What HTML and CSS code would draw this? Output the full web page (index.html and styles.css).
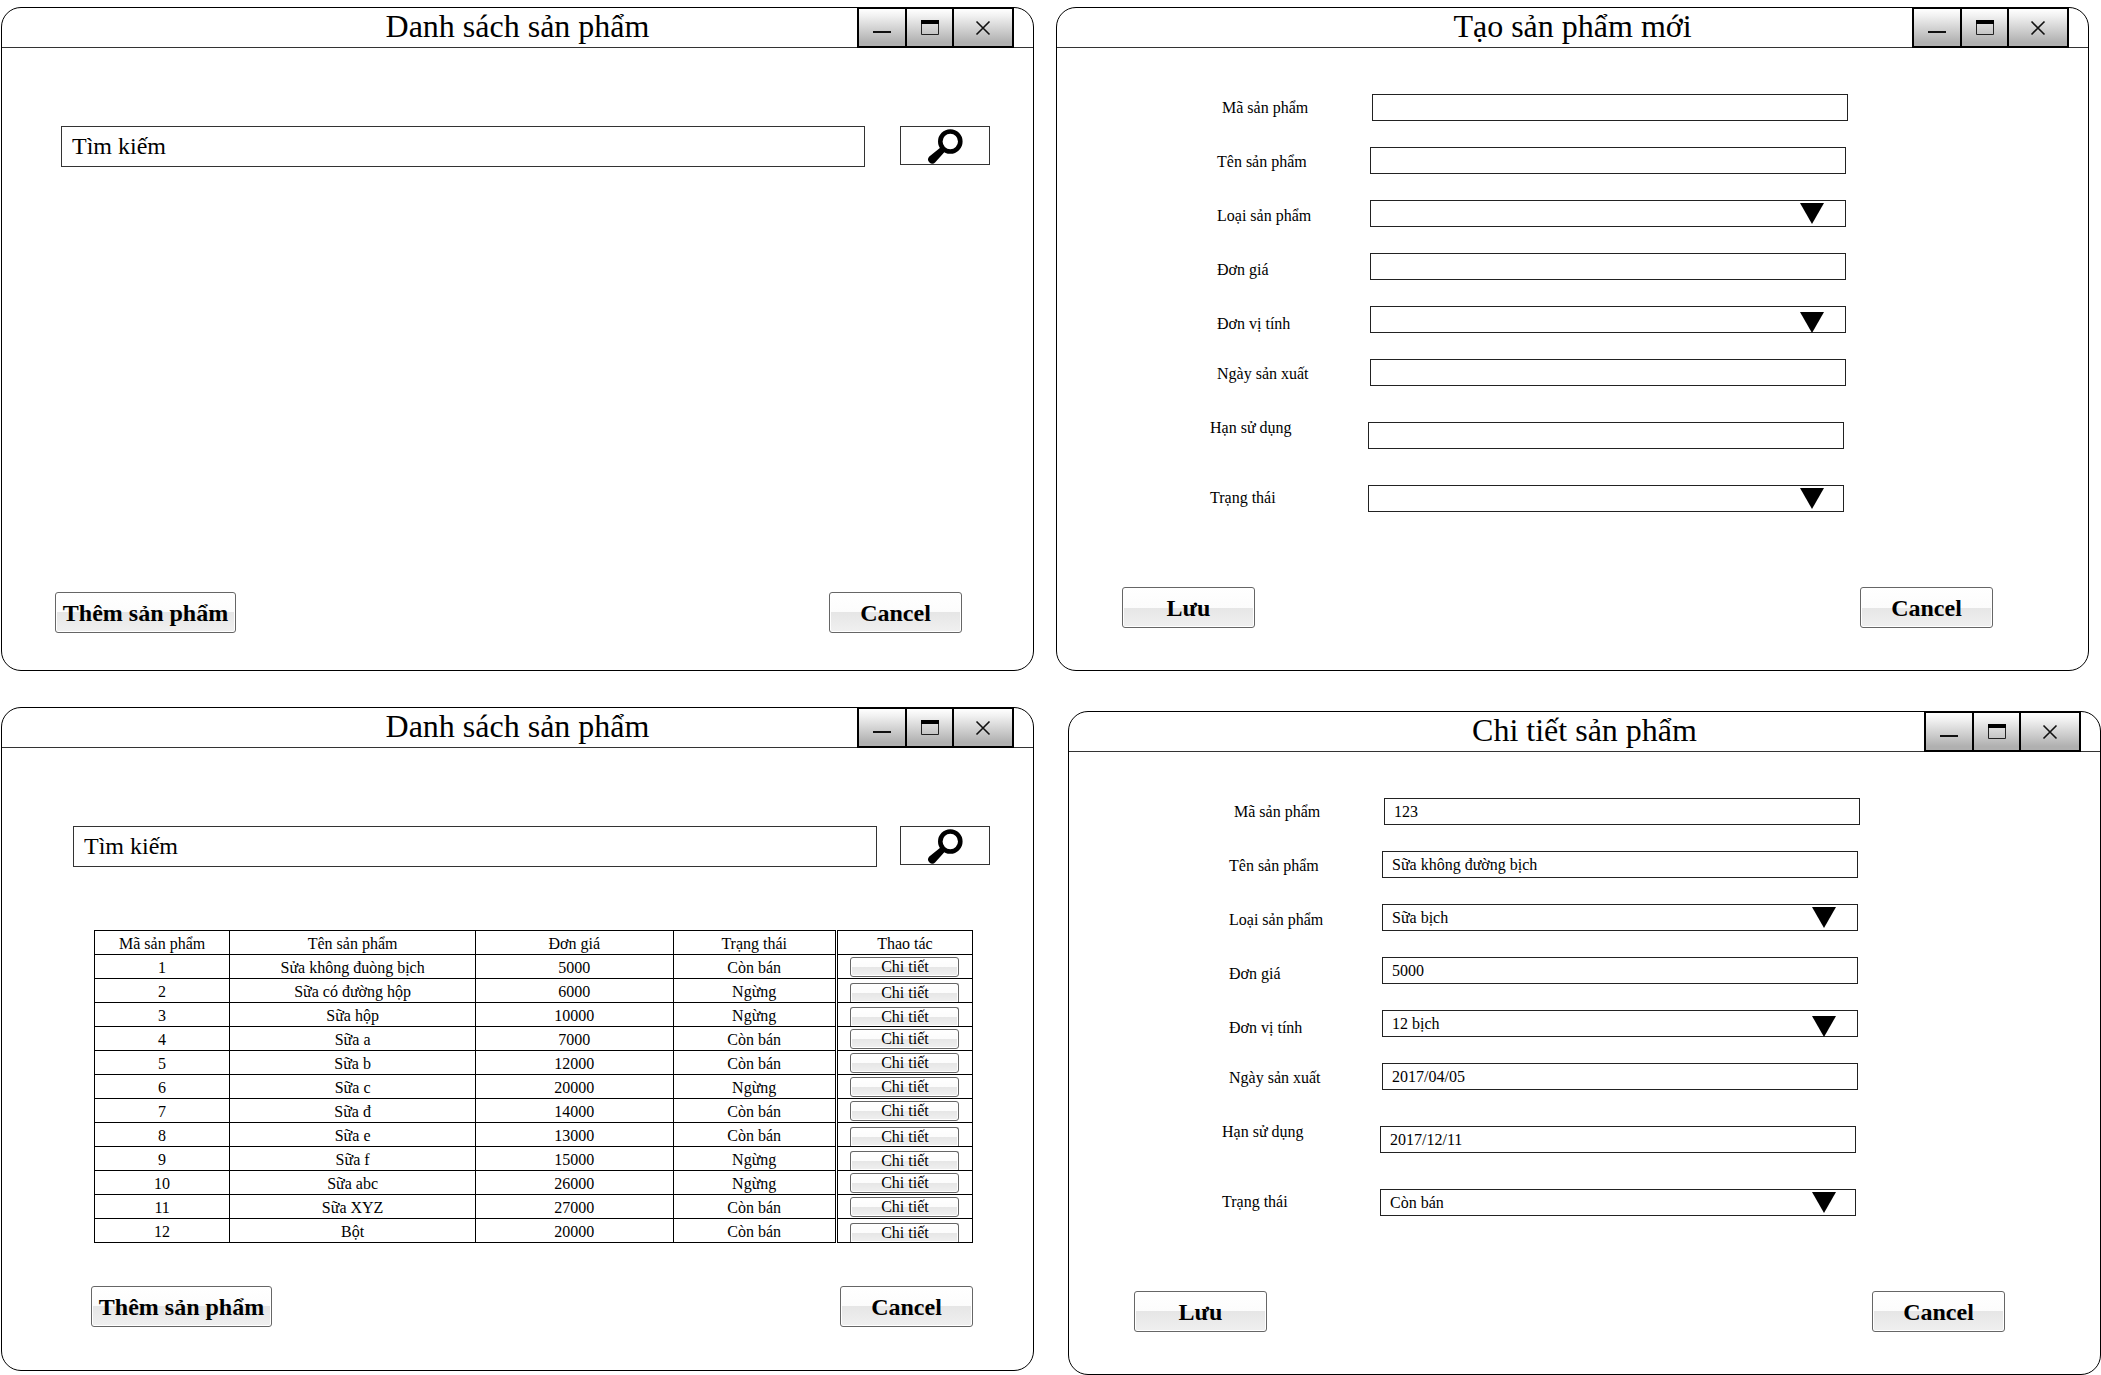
FILE: index.html
```html
<!DOCTYPE html>
<html lang="vi">
<head>
<meta charset="utf-8">
<title>Quản lý sản phẩm</title>
<link rel="stylesheet" href="styles.css">
</head>
<body>
<svg class="sprite" aria-hidden="true">
  <symbol id="i-min" viewBox="0 0 20 18"><path d="M1 13h18" stroke="#111" stroke-width="2" fill="none"/></symbol>
  <symbol id="i-max" viewBox="0 0 20 18"><path d="M1.5 1.5h17v14h-17z" stroke="#222" fill="none"/><path d="M1 1h18v4H1z" fill="#000"/></symbol>
  <symbol id="i-close" viewBox="0 0 20 18"><path d="M3.500 2.500l13 13M16.500 2.500l-13 13" stroke="#111" stroke-width="1.600" fill="none"/></symbol>
  <symbol id="i-search" viewBox="0 0 36 36"><circle cx="23.300" cy="13.500" r="10" stroke="#000" stroke-width="4.600" fill="none"/><path d="M13.800 19.200L18.200 23.200L8.300 34.200A4 4 0 0 1 2.300 28.600Z" fill="#000"/></symbol>
  <symbol id="i-arrow" viewBox="0 0 24 21"><path d="M0 0h24L12 21z" fill="#000"/></symbol>
</svg>

<main class="desktop">
  <div class="row row-top">
    <section class="window">
      <header class="titlebar">
        <h2>Danh sách sản phẩm</h2>
        <div class="controls">
          <button type="button" aria-label="Thu nhỏ"><svg><use href="#i-min"/></svg></button>
          <button type="button" aria-label="Phóng to"><svg><use href="#i-max"/></svg></button>
          <button type="button" class="close" aria-label="Đóng"><svg><use href="#i-close"/></svg></button>
        </div>
      </header>
      <form class="search">
        <input type="text" aria-label="Tìm kiếm" value="Tìm kiếm">
        <button type="button" aria-label="Tìm"><svg><use href="#i-search"/></svg></button>
      </form>
      <footer class="actions">
        <button type="button" class="btn wide">Thêm sản phẩm</button>
        <button type="button" class="btn">Cancel</button>
      </footer>
    </section>

    <section class="window form-window">
      <header class="titlebar">
        <h2>Tạo sản phẩm mới</h2>
        <div class="controls">
          <button type="button" aria-label="Thu nhỏ"><svg><use href="#i-min"/></svg></button>
          <button type="button" aria-label="Phóng to"><svg><use href="#i-max"/></svg></button>
          <button type="button" class="close" aria-label="Đóng"><svg><use href="#i-close"/></svg></button>
        </div>
      </header>
      <form class="form">
        <div class="labels">
          <label class="first" for="n1">Mã sản phẩm</label>
          <label for="n2">Tên sản phẩm</label>
          <label for="n3">Loại sản phẩm</label>
          <label for="n4">Đơn giá</label>
          <label for="n5">Đơn vị tính</label>
          <label class="date" for="n6">Ngày sản xuất</label>
          <label class="last" for="n7">Hạn sử dụng</label>
          <label class="last status" for="n8">Trạng thái</label>
        </div>
        <div class="fields">
          <div class="field first"><input type="text" id="n1"></div>
          <div class="field"><input type="text" id="n2"></div>
          <div class="field"><select id="n3"><option></option></select><svg><use href="#i-arrow"/></svg></div>
          <div class="field"><input type="text" id="n4"></div>
          <div class="field unit"><select id="n5"><option></option></select><svg><use href="#i-arrow"/></svg></div>
          <div class="field"><input type="text" id="n6"></div>
          <div class="field last"><input type="text" id="n7"></div>
          <div class="field last"><select id="n8"><option></option></select><svg><use href="#i-arrow"/></svg></div>
        </div>
      </form>
      <footer class="actions">
        <button type="button" class="btn">Lưu</button>
        <button type="button" class="btn">Cancel</button>
      </footer>
    </section>
  </div>

  <div class="row row-bottom">
    <section class="window list-window">
      <header class="titlebar">
        <h2>Danh sách sản phẩm</h2>
        <div class="controls">
          <button type="button" aria-label="Thu nhỏ"><svg><use href="#i-min"/></svg></button>
          <button type="button" aria-label="Phóng to"><svg><use href="#i-max"/></svg></button>
          <button type="button" class="close" aria-label="Đóng"><svg><use href="#i-close"/></svg></button>
        </div>
      </header>
      <form class="search">
        <input type="text" aria-label="Tìm kiếm" value="Tìm kiếm">
        <button type="button" aria-label="Tìm"><svg><use href="#i-search"/></svg></button>
      </form>
      <div class="table-wrap">
        <table>
          <colgroup><col class="c-id"><col class="c-name"><col class="c-price"><col class="c-state"><col></colgroup>
          <thead>
            <tr><th>Mã sản phẩm</th><th>Tên sản phẩm</th><th>Đơn giá</th><th>Trạng thái</th><th>Thao tác</th></tr>
          </thead>
          <tbody>
            <tr><td>1</td><td>Sửa không đuòng bịch</td><td>5000</td><td>Còn bán</td><td><button type="button">Chi tiết</button></td></tr>
            <tr class="low"><td>2</td><td>Sữa có đường hộp</td><td>6000</td><td>Ngừng</td><td><button type="button">Chi tiết</button></td></tr>
            <tr class="low"><td>3</td><td>Sữa hộp</td><td>10000</td><td>Ngừng</td><td><button type="button">Chi tiết</button></td></tr>
            <tr><td>4</td><td>Sữa a</td><td>7000</td><td>Còn bán</td><td><button type="button">Chi tiết</button></td></tr>
            <tr><td>5</td><td>Sữa b</td><td>12000</td><td>Còn bán</td><td><button type="button">Chi tiết</button></td></tr>
            <tr><td>6</td><td>Sữa c</td><td>20000</td><td>Ngừng</td><td><button type="button">Chi tiết</button></td></tr>
            <tr><td>7</td><td>Sữa đ</td><td>14000</td><td>Còn bán</td><td><button type="button">Chi tiết</button></td></tr>
            <tr class="low"><td>8</td><td>Sữa e</td><td>13000</td><td>Còn bán</td><td><button type="button">Chi tiết</button></td></tr>
            <tr class="low"><td>9</td><td>Sữa f</td><td>15000</td><td>Ngừng</td><td><button type="button">Chi tiết</button></td></tr>
            <tr><td>10</td><td>Sữa abc</td><td>26000</td><td>Ngừng</td><td><button type="button">Chi tiết</button></td></tr>
            <tr><td>11</td><td>Sữa XYZ</td><td>27000</td><td>Còn bán</td><td><button type="button">Chi tiết</button></td></tr>
            <tr class="low"><td>12</td><td>Bột</td><td>20000</td><td>Còn bán</td><td><button type="button">Chi tiết</button></td></tr>
          </tbody>
        </table>
      </div>
      <footer class="actions">
        <button type="button" class="btn wide">Thêm sản phẩm</button>
        <button type="button" class="btn">Cancel</button>
      </footer>
    </section>

    <section class="window form-window">
      <header class="titlebar">
        <h2>Chi tiết sản phẩm</h2>
        <div class="controls">
          <button type="button" aria-label="Thu nhỏ"><svg><use href="#i-min"/></svg></button>
          <button type="button" aria-label="Phóng to"><svg><use href="#i-max"/></svg></button>
          <button type="button" class="close" aria-label="Đóng"><svg><use href="#i-close"/></svg></button>
        </div>
      </header>
      <form class="form">
        <div class="labels">
          <label class="first" for="d1">Mã sản phẩm</label>
          <label for="d2">Tên sản phẩm</label>
          <label for="d3">Loại sản phẩm</label>
          <label for="d4">Đơn giá</label>
          <label for="d5">Đơn vị tính</label>
          <label class="date" for="d6">Ngày sản xuất</label>
          <label class="last" for="d7">Hạn sử dụng</label>
          <label class="last status" for="d8">Trạng thái</label>
        </div>
        <div class="fields">
          <div class="field first"><input type="text" id="d1" value="123"></div>
          <div class="field"><input type="text" id="d2" value="Sữa không đường bịch"></div>
          <div class="field"><select id="d3"><option>Sữa bịch</option></select><svg><use href="#i-arrow"/></svg></div>
          <div class="field"><input type="text" id="d4" value="5000"></div>
          <div class="field unit"><select id="d5"><option>12 bịch</option></select><svg><use href="#i-arrow"/></svg></div>
          <div class="field"><input type="text" id="d6" value="2017/04/05"></div>
          <div class="field last"><input type="text" id="d7" value="2017/12/11"></div>
          <div class="field last"><select id="d8"><option>Còn bán</option></select><svg><use href="#i-arrow"/></svg></div>
        </div>
      </form>
      <footer class="actions">
        <button type="button" class="btn">Lưu</button>
        <button type="button" class="btn">Cancel</button>
      </footer>
    </section>
  </div>
</main>
</body>
</html>
```
FILE: styles.css
```css
* { box-sizing: border-box; }

body {
  margin: 0;
  background: #fff;
  color: #000;
  font: 16px/18px "Liberation Serif", "Times New Roman", serif;
}

button, input, select {
  margin: 0;
  color: inherit;
  font: inherit;
}

.sprite { display: none; }

.desktop {
  display: flex;
  flex-direction: column;
  gap: 36px;
  padding-top: 7px;
}

.row { display: flex; align-items: flex-start; }
.row-top { gap: 22px; padding: 0 12px 0 1px; }
.row-bottom { gap: 34px; padding-left: 1px; }
.row-bottom .form-window { margin-top: 4px; }

/* Window frame */
.window {
  flex: 1;
  min-width: 0;
  min-height: 664px;
  display: flex;
  flex-direction: column;
  border: 1px solid #000;
  border-radius: 20px;
}

.titlebar {
  display: grid;
  grid-template-columns: 1fr auto 1fr;
  height: 40px;
  border-bottom: 1px solid #333;
}

.titlebar h2 {
  grid-column: 2;
  margin: 0;
  font-size: 32px;
  font-weight: 400;
  line-height: 36px;
}

.controls {
  display: flex;
  justify-self: end;
  margin: -1px 19px -1px 0;
}

.controls button {
  display: flex;
  align-items: center;
  justify-content: center;
  width: 49px;
  margin-left: -2px;
  padding: 0;
  border: 2px solid #000;
  background: linear-gradient(#fff, #f0f0f0 20%, #b0b0b0 90%);
}

.controls button:first-child { width: 50px; }
.controls .close { width: 62px; }
.controls svg { width: 20px; height: 18px; }

/* Search bar */
.search {
  display: flex;
  gap: 35px;
  padding: 78px 43px 0 59px;
}

.search input {
  flex: 1;
  min-width: 0;
  height: 41px;
  padding: 0 10px;
  border: 1px solid #333;
  background: #fff;
  font-size: 24px;
}

.search button {
  display: flex;
  align-items: center;
  justify-content: center;
  width: 90px;
  height: 39px;
  padding: 0;
  border: 1px solid #333;
  background: #fff;
}

.search svg { width: 36px; height: 36px; }

.list-window .search { gap: 23px; padding-left: 71px; }

/* Push buttons */
.actions {
  display: flex;
  justify-content: space-between;
  margin-top: auto;
  padding: 0 71px 37px 53px;
}

.list-window .actions { padding: 0 60px 43px 89px; }
.form-window .actions { padding: 0 95px 42px 65px; }

.btn, td button {
  border: 1px solid #666;
  border-radius: 3px;
  background: linear-gradient(#fff, #fcfcfc 50%, #e6e6e6 50%, #f0f0f0);
  box-shadow: inset 0 0 0 1px #fff;
}

.btn {
  width: 133px;
  height: 41px;
  padding: 0;
  font-size: 24px;
  font-weight: 700;
  line-height: 36px;
}

.btn.wide { width: 181px; }

/* Product form */
.form { display: flex; padding: 46px 240px 0 153px; }

.labels {
  display: flex;
  flex-direction: column;
  gap: 36px;
  width: 158px;
  padding-top: 5px;
}

.labels label { padding-left: 7px; }
.labels .first { padding-left: 12px; }
.labels .last { padding-left: 0; }
.labels .date { margin-top: -4px; }
.labels .status { margin-top: 16px; }

.fields {
  flex: 1;
  min-width: 0;
  display: flex;
  flex-direction: column;
  gap: 26px;
}

.field { position: relative; padding: 0 2px; }
.field.first { padding: 0 0 0 4px; }
.field.last { margin-top: 10px; padding: 0 4px 0 0; }

.field input, .field select {
  display: block;
  width: 100%;
  height: 27px;
  padding: 0 9px;
  appearance: none;
  border: 1px solid #222;
  border-radius: 0;
  background: #fff;
}

.field svg {
  position: absolute;
  top: 3px;
  right: 24px;
  width: 24px;
  height: 21px;
  pointer-events: none;
}

.field.unit svg { top: 6px; }

/* Product table */
.table-wrap { padding: 63px 60px 0 92px; }

table {
  width: 100%;
  table-layout: fixed;
  border-collapse: collapse;
}

.c-id { width: 15.4%; }
.c-name { width: 28%; }
.c-price { width: 22.5%; }
.c-state { width: 18.6%; }

th, td {
  height: 24px;
  padding: 2px 0 0;
  border: 1px solid #000;
  font-weight: 400;
  line-height: 18px;
  text-align: center;
}

th:last-child, td:last-child { border-left: 3px double #000; }
td:last-child { padding: 0; }

td button {
  display: block;
  width: 109px;
  height: 20px;
  margin: 0 auto;
  padding: 0;
  line-height: 16px;
}

.low td:last-child { vertical-align: bottom; }

.low button {
  height: 19px;
  border-bottom: 0;
  border-radius: 3px 3px 0 0;
}
```
